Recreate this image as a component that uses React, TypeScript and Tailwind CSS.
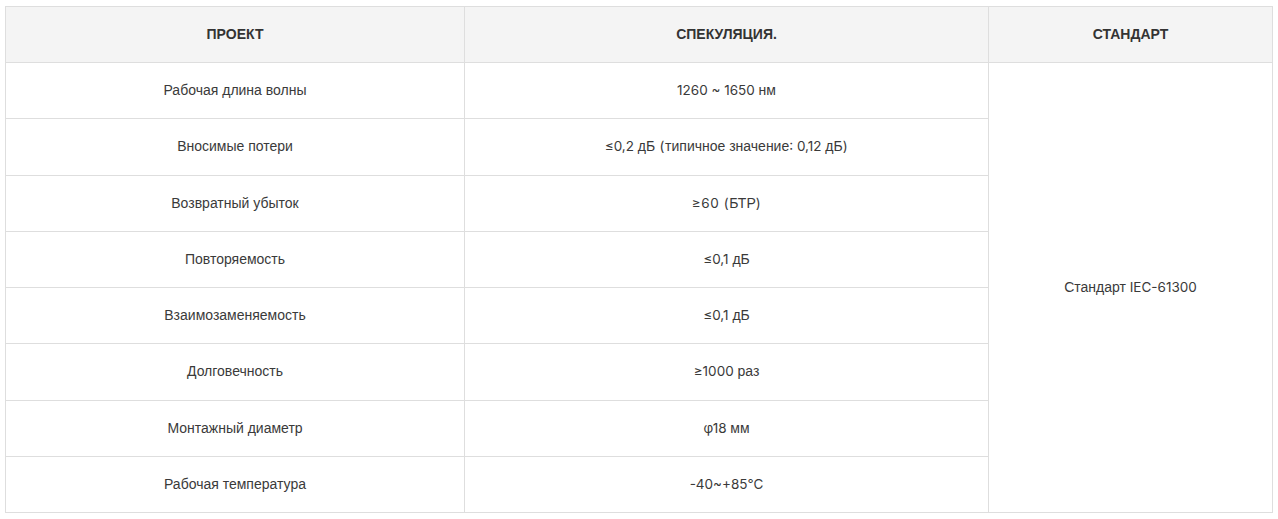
import React from "react";

const rows: [string, string][] = [
  ["Рабочая длина волны", "1260 ~ 1650 нм"],
  ["Вносимые потери", "≤0,2 дБ (типичное значение: 0,12 дБ)"],
  ["Возвратный убыток", "≥60 (БТР)"],
  ["Повторяемость", "≤0,1 дБ"],
  ["Взаимозаменяемость", "≤0,1 дБ"],
  ["Долговечность", "≥1000 раз"],
  ["Монтажный диаметр", "φ18 мм"],
  ["Рабочая температура", "-40~+85℃"],
];

function Mixed({ text }: { text: string }) {
  const parts = text.split(/([\u0400-\u04FF]+(?: [\u0400-\u04FF]+)*)/);
  return (
    <>
      {parts.map((p, i) =>
        /[\u0400-\u04FF]/.test(p) ? (
          <span key={i} className="font-['Liberation_Sans',Arial,sans-serif]">
            {p}
          </span>
        ) : /[()]/.test(p) ? (
          <span key={i} className="font-['Inter',sans-serif] text-[13.5px] tracking-[0.6px]">
            {p}
          </span>
        ) : (
          <span key={i} className="font-['Inter',sans-serif] text-[13.5px]">
            {p}
          </span>
        )
      )}
    </>
  );
}

export default function App() {
  return (
    <div className="bg-white w-[1278px] h-[519px] pl-[5px] pt-[6px] font-['Liberation_Sans',Arial,sans-serif] text-[#333]">
      <table className="border-collapse w-[1268px] table-fixed">
        <colgroup>
          <col className="w-[459px]" />
          <col className="w-[524px]" />
          <col />
        </colgroup>
        <thead>
          <tr className="bg-[#f4f4f4]">
            <th className="border border-[#dedede] h-[56px] text-[14px] font-bold text-[#333] text-center align-middle">
              ПРОЕКТ
            </th>
            <th className="border border-[#dedede] h-[56px] text-[14px] font-bold text-[#333] text-center align-middle">
              СПЕКУЛЯЦИЯ.
            </th>
            <th className="border border-[#dedede] h-[56px] text-[14px] font-bold text-[#333] text-center align-middle">
              СТАНДАРТ
            </th>
          </tr>
        </thead>
        <tbody>
          {rows.map(([a, b], i) => (
            <tr key={i}>
              <td className="border border-[#dedede] h-[56.25px] text-[14px] text-center align-middle text-[#3a3a3a]">
                {a}
              </td>
              <td className="border border-[#dedede] h-[56.25px] text-[14px] text-center align-middle text-[#3a3a3a]">
                <Mixed text={b} />
              </td>
              {i === 0 && (
                <td
                  rowSpan={8}
                  className="border border-[#dedede] text-[14px] text-center align-middle text-[#3a3a3a]"
                >
                  <Mixed text="Стандарт IEC-61300" />
                </td>
              )}
            </tr>
          ))}
        </tbody>
      </table>
    </div>
  );
}
